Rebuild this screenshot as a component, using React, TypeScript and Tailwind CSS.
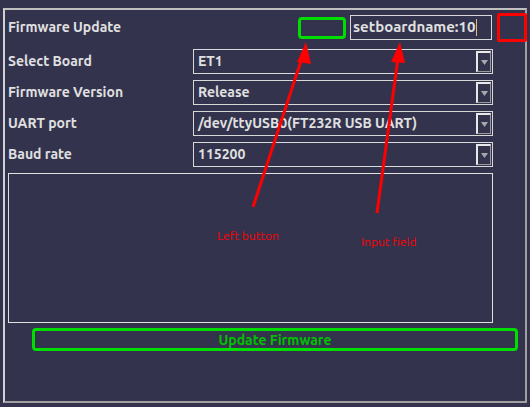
import React from "react";

const font = { fontFamily: "Ubuntu, 'Open Sans', 'DejaVu Sans', sans-serif" };

const rows = [
  { label: "Select Board", value: "ET1" },
  { label: "Firmware Version", value: "Release" },
  { label: "UART port", value: "/dev/ttyUSB0(FT232R USB UART)" },
  { label: "Baud rate", value: "115200" },
];

function Combo({ value }: { value: string }) {
  return (
    <div className="flex h-[25px] w-[300px] items-stretch border border-[#d8d8d8]">
      <span className="flex-1 pl-[4px] text-[14px] font-bold leading-[23px] text-[#e0e0e0]">{value}</span>
      <span className="m-[1px] flex w-[15px] items-center justify-center border-l-2 border-t-2 border-[#e8e8e8] border-r border-b border-r-[#9a9a9a] border-b-[#9a9a9a] bg-[#34334e]">
        <svg width="7" height="5" viewBox="0 0 7 5">
          <path d="M0 0h7L3.5 5z" fill="#a8a8a8" />
        </svg>
      </span>
    </div>
  );
}

export default function App() {
  return (
    <div className="relative h-[407px] w-[530px] bg-[#33334d] pl-[3px] pt-[8px]" style={font}>
      <div className="flex h-[395px] w-[524px] flex-col border-2 border-t-[#c0c0c0] border-l-[#d0d0d0] border-r-[#a0a0a0] border-b-[#a0a0a0] pl-[3px] pt-[3px]">
        {/* Header row */}
        <div className="flex h-[29px] items-center">
          <span className="w-[287px] shrink-0 text-[14px] font-bold text-[#e0e0e0]">Firmware Update</span>
          <button className="ml-[3px] h-[22px] w-[48px] shrink-0 rounded-[4px] border-[3px] border-[#00dd00]" />
          <div className="ml-[4px] flex h-[25px] w-[142px] shrink-0 items-center border border-[#d8d8d8] pl-[2px] text-[15px] font-bold text-[#e0e0e0]">
            setboardname:10
            <span className="ml-[1px] h-[17px] w-px bg-[#e0c080]" />
          </div>
          <div className="relative z-10 ml-[5px] h-[29px] w-[30px] shrink-0 rounded-[2px] border-[3px] border-[#ff0000]" />
        </div>

        {/* Settings */}
        <div className="mt-[7px] flex flex-col gap-[6px]">
          {rows.map((r) => (
            <div key={r.label} className="flex h-[25px] items-center">
              <span className="w-[185px] text-[14px] font-bold text-[#e0e0e0]">{r.label}</span>
              <Combo value={r.value} />
            </div>
          ))}
        </div>

        {/* Log area */}
        <div className="mt-[6px] h-[150px] w-[485px] border border-[#e0e0e0]" />

        {/* Update button */}
        <button className="ml-[24px] mt-[5px] h-[23px] w-[486px] rounded-[4px] border-[3px] border-[#00dd00] text-[14px] font-bold leading-[16px] text-[#00c000]">
          Update Firmware
        </button>
      </div>

      {/* Annotations */}
      <svg className="pointer-events-none absolute left-0 top-0" width="530" height="407">
        <line x1="253" y1="207" x2="302" y2="58" stroke="#ff0000" strokeWidth="3" />
        <polygon points="306,42 297,62 311,64" fill="#ff0000" />
        <line x1="377" y1="213" x2="398" y2="58" stroke="#ff0000" strokeWidth="3" />
        <polygon points="400,42 391,62 405,63" fill="#ff0000" />
      </svg>
      <span className="absolute left-[217px] top-[227px] text-[12px] text-[#ff0000]">Left button</span>
      <span className="absolute left-[361px] top-[233px] text-[12px] text-[#ff0000]">Input field</span>
    </div>
  );
}
